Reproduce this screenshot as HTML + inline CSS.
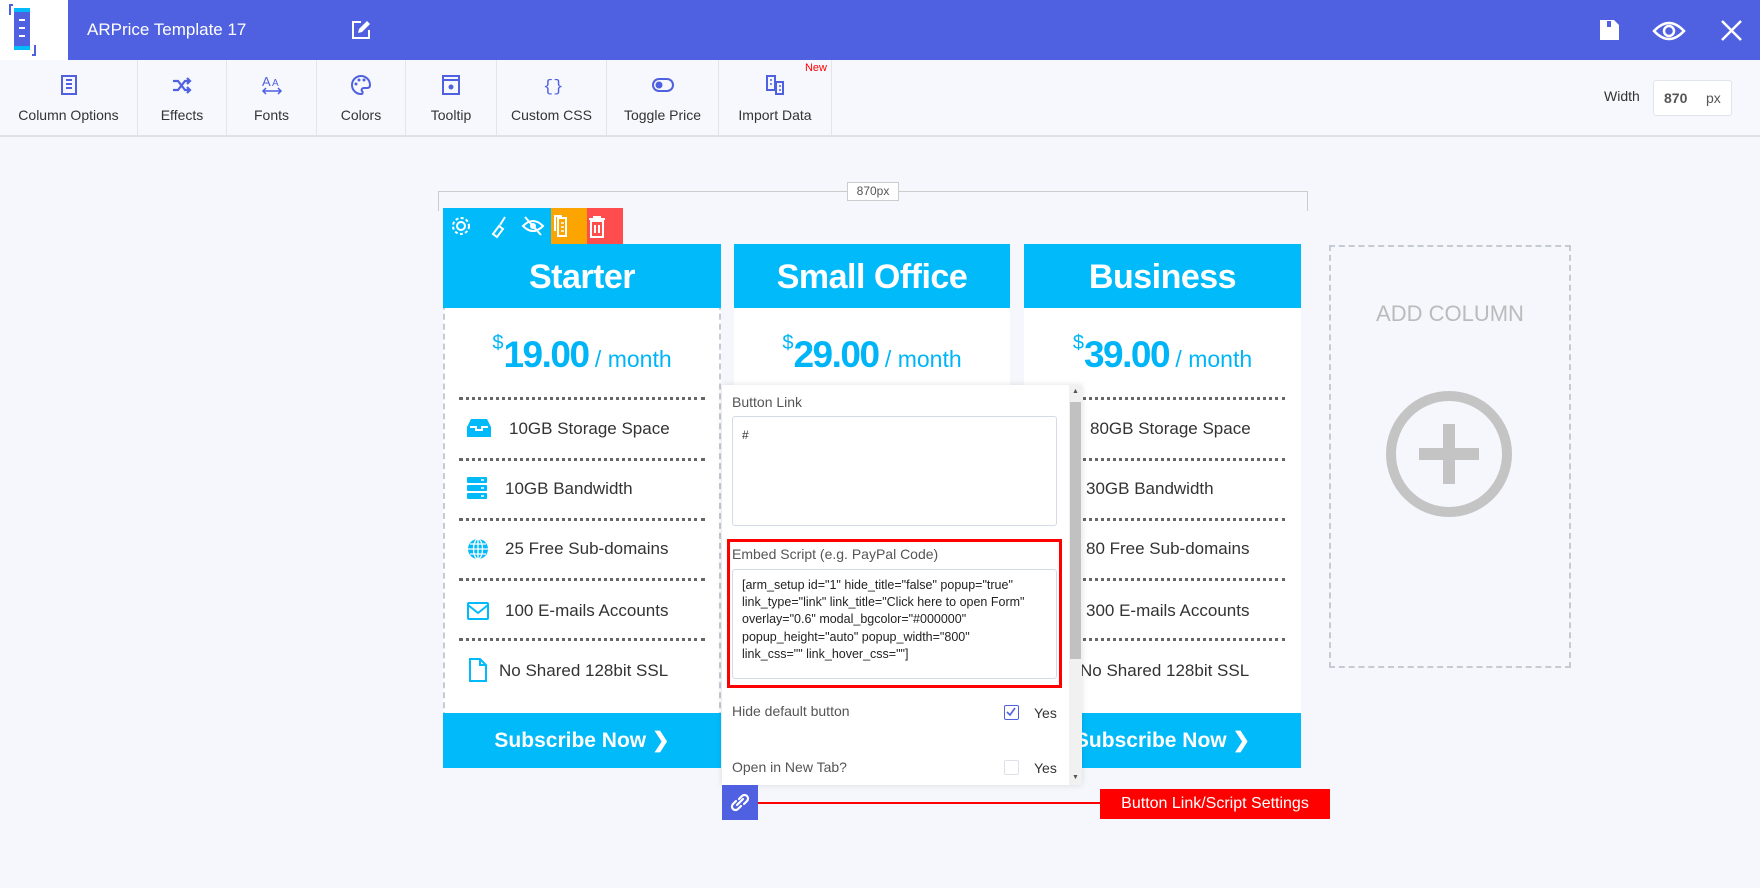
<!DOCTYPE html>
<html><head><meta charset="utf-8"><style>
*{box-sizing:border-box;margin:0;padding:0}
body{width:1760px;height:888px;background:#f5f7fc;font-family:"Liberation Sans",sans-serif;position:relative;overflow:hidden;color:#333}
.abs{position:absolute}
.hdr{left:0;top:0;width:1760px;height:60px;background:#4f61e0}
.logo{left:0;top:0;width:68px;height:60px;background:#fff}
.tb{left:0;top:60px;width:1760px;height:77px;background:#f6f8fd;border-bottom:2px solid #dfe1e7}
.ti{position:absolute;top:0;height:75px;border-right:1px solid #e3e5ea;text-align:center;font-size:14px;color:#333}
.ti span{position:absolute;left:0;right:0;top:47px}
.ti svg{position:absolute;top:14px;left:50%;margin-left:-11px}
.col{position:absolute;top:244px;height:524px;background:#fff}
.ch{height:64px;background:#00baf9;color:#fff;font-weight:bold;font-size:34px;text-align:center;line-height:66px;letter-spacing:-.5px}
.pr{position:absolute;top:90px;left:0;right:0;text-align:center;color:#00b5f7}
.pr b{font-size:37px;letter-spacing:-1.5px}
.pr i{font-style:normal;font-size:23px}
.pr sup{font-size:20px;vertical-align:top;position:relative;top:-2px}
.sep{position:absolute;left:16px;right:16px;border-top:3px dotted #666;height:0}
.ft{position:absolute;left:16px;font-size:17px;color:#333}
.btn{position:absolute;bottom:0;left:0;right:0;height:55px;background:#00baf9;color:#fff;font-weight:bold;font-size:21px;text-align:center;line-height:55px}
.lbl{position:absolute;font-size:14px;color:#555}
.ta{position:absolute;border:1px solid #d4dbe6;border-radius:3px;background:#fff}
</style></head><body>
<div class="abs hdr"></div>
<div class="abs logo">
<svg width="68" height="60" style="position:absolute;left:0;top:0"><path d="M13 5h-3v10M32 55h3v-10" stroke="#4f61e0" stroke-width="2" fill="none"/><rect x="14" y="8" width="16" height="42" rx="2" fill="#4f61e0"/><rect x="14" y="8" width="16" height="4" fill="#00baf9"/><rect x="14" y="46" width="16" height="4" fill="#00baf9"/><path d="M19 20h6M19 28h6M19 36h6" stroke="#fff" stroke-width="2"/></svg></div>
<div class="abs" style="left:87px;top:20px;color:#fff;font-size:17px">ARPrice Template 17</div>
<svg class="abs" style="left:350px;top:19px" width="22" height="22"><path d="M11 3H3v16h16v-8" stroke="#fff" stroke-width="2" fill="none"/><path d="M8 14l1-4 8-8 3 3-8 8z" fill="#fff"/></svg>
<svg class="abs" style="left:1600px;top:19px" width="20" height="22"><path d="M0 1h14l5 5v15H0z" fill="#fff"/><rect x="7" y="2" width="4" height="6" fill="#4f61e0"/></svg>
<svg class="abs" style="left:1652px;top:19px" width="34" height="24"><path d="M2 12Q17-4 32 12Q17 28 2 12z" stroke="#fff" stroke-width="2.5" fill="none"/><circle cx="17" cy="12" r="5" stroke="#fff" stroke-width="2.5" fill="none"/></svg>
<svg class="abs" style="left:1721px;top:20px" width="21" height="21"><path d="M1 1l19 19M20 1L1 20" stroke="#fff" stroke-width="2.5"/></svg>

<div class="abs tb">
<div class="ti" style="left:0;width:138px"><svg width="22" height="22"><rect x="4" y="2" width="14" height="18" stroke="#4f61e0" stroke-width="2" fill="none"/><path d="M8 6h6M8 10h6M8 14h6" stroke="#4f61e0" stroke-width="2"/></svg><span>Column Options</span></div>
<div class="ti" style="left:138px;width:89px"><svg width="22" height="22"><path d="M2 7h5l7 9h5M2 16h5l7-9h5M16 4l3 3-3 3M16 13l3 3-3 3" stroke="#4f61e0" stroke-width="2.2" fill="none"/></svg><span>Effects</span></div>
<div class="ti" style="left:227px;width:90px"><svg width="22" height="22"><text x="1" y="12" font-size="13" fill="#4f61e0" font-family="Liberation Sans">A</text><text x="11" y="12" font-size="10" fill="#4f61e0" font-family="Liberation Sans">A</text><path d="M2 17h18M5 14l-3 3 3 3M17 14l3 3-3 3" stroke="#4f61e0" stroke-width="1.5" fill="none"/></svg><span>Fonts</span></div>
<div class="ti" style="left:317px;width:89px"><svg width="22" height="22"><path d="M11 2a9 9 0 1 0 0 18c2 0 2-2 1-3s0-3 2-3h3c2 0 3-1 3-3A9 9 0 0 0 11 2z" stroke="#4f61e0" stroke-width="2" fill="none"/><circle cx="6" cy="10" r="1.5" fill="#4f61e0"/><circle cx="9" cy="6" r="1.5" fill="#4f61e0"/><circle cx="14" cy="6" r="1.5" fill="#4f61e0"/></svg><span>Colors</span></div>
<div class="ti" style="left:406px;width:91px"><svg width="22" height="22"><rect x="3" y="2" width="16" height="18" stroke="#4f61e0" stroke-width="2" fill="none"/><path d="M3 6h16" stroke="#4f61e0" stroke-width="2"/><circle cx="11" cy="13" r="2.5" fill="#4f61e0"/></svg><span>Tooltip</span></div>
<div class="ti" style="left:497px;width:110px"><svg width="22" height="22"><text x="2" y="17" font-size="17" fill="#4f61e0" font-family="Liberation Mono">{}</text></svg><span>Custom CSS</span></div>
<div class="ti" style="left:607px;width:112px"><svg width="22" height="22"><rect x="1" y="5" width="20" height="12" rx="6" stroke="#4f61e0" stroke-width="2" fill="none"/><circle cx="7" cy="11" r="3.5" fill="#4f61e0"/></svg><span>Toggle Price</span></div>
<div class="ti" style="left:719px;width:113px"><svg width="22" height="22"><rect x="3" y="2" width="8" height="14" stroke="#4f61e0" stroke-width="2" fill="none"/><rect x="12" y="8" width="7" height="12" stroke="#4f61e0" stroke-width="2" fill="none"/><path d="M6 6h2M6 10h2M15 12h2M15 16h2" stroke="#4f61e0" stroke-width="1.5"/></svg><span>Import Data</span><div style="position:absolute;right:4px;top:2px;font-size:11px;color:#f00">New</div></div>
<div class="abs" style="left:1604px;top:28px;font-size:14px;color:#333">Width</div>
<div class="abs" style="left:1653px;top:20px;width:79px;height:36px;background:#fff;border:1px solid #e0e4ec;border-radius:3px;font-size:14px"><b style="position:absolute;left:10px;top:9px;color:#555">870</b><span style="position:absolute;left:52px;top:9px;color:#555">px</span></div>
</div>

<div class="abs" style="left:438px;top:191px;width:870px;height:20px;border-top:1px solid #ccc;border-left:1px solid #ccc;border-right:1px solid #ccc"></div>
<div class="abs" style="left:847px;top:182px;width:52px;height:19px;background:#fff;border:1px solid #ccc;font-size:12px;color:#555;text-align:center;line-height:17px">870px</div>

<div class="abs" style="left:443px;top:208px;width:108px;height:36px;background:#00baf9"></div>
<div class="abs" style="left:551px;top:208px;width:36px;height:36px;background:#fca400"></div>
<div class="abs" style="left:587px;top:208px;width:36px;height:36px;background:#ff4c4c"></div>
<svg class="abs" style="left:443px;top:208px" width="180" height="36">
<circle cx="18" cy="18" r="4" stroke="#fff" stroke-width="2" fill="none"/><circle cx="18" cy="18" r="8" stroke="#fff" stroke-width="2" stroke-dasharray="3 2.3" fill="none"/>
<path d="M50 26l6-8 4 3-6 8zM57 17l5-8" stroke="#fff" stroke-width="2" fill="none"/>
<path d="M80 18q10-10 20 0q-10 10-20 0zM82 9l16 18" stroke="#fff" stroke-width="2" fill="none"/><circle cx="90" cy="18" r="3" fill="#fff"/>
<path d="M115 10h8v18h-8zM119 8h-7v15" stroke="#fff" stroke-width="2" fill="none"/><path d="M118 15h3M118 19h3M118 23h3" stroke="#fff" stroke-width="1.5"/>
<path d="M146 11h16M151 11v-2h6v2M148 13h12v16h-12zM152 17v8M156 17v8" stroke="#fff" stroke-width="2" fill="none"/>
</svg>

<div class="col" style="left:443px;width:278px;border:2px dashed #c6cad2;border-top:none">
<div class="ch" style="margin:0 -2px">Starter</div>
</div>
<div class="col" style="left:734px;width:276px"><div class="ch">Small Office</div></div>
<div class="col" style="left:1024px;width:277px"><div class="ch">Business</div></div>

<div class="abs" style="left:443px;top:244px;width:278px;height:524px">
<div class="pr"><sup>$</sup><b>19.00</b><i> / month</i></div>
<div class="sep" style="top:153px"></div><div class="sep" style="top:214px"></div><div class="sep" style="top:274px"></div><div class="sep" style="top:334px"></div><div class="sep" style="top:394px"></div>
<svg class="abs" style="left:24px;top:175px" width="24" height="18"><path d="M4 0h16l4 8v10H0V8z" fill="#00baf9"/><path d="M3 8h6v3h6V8h6" stroke="#fff" stroke-width="2" fill="none"/></svg>
<div class="ft" style="left:66px;top:175px">10GB Storage Space</div>
<svg class="abs" style="left:24px;top:233px" width="20" height="22"><rect y="0" width="20" height="6" rx="1" fill="#00baf9"/><rect y="8" width="20" height="6" rx="1" fill="#00baf9"/><rect y="16" width="20" height="6" rx="1" fill="#00baf9"/><path d="M14 3h3M14 11h3M14 19h3" stroke="#fff" stroke-width="1.5"/></svg>
<div class="ft" style="left:62px;top:235px">10GB Bandwidth</div>
<svg class="abs" style="left:24px;top:294px" width="22" height="22"><circle cx="11" cy="11" r="10" fill="#00baf9"/><path d="M1 11h20M11 1v20M3 6h16M3 16h16" stroke="#fff" stroke-width="1.3"/><ellipse cx="11" cy="11" rx="4.5" ry="10" stroke="#fff" stroke-width="1.3" fill="none"/></svg>
<div class="ft" style="left:62px;top:295px">25 Free Sub-domains</div>
<svg class="abs" style="left:24px;top:358px" width="22" height="18"><rect x="1" y="1" width="20" height="16" rx="1" stroke="#00baf9" stroke-width="2" fill="none"/><path d="M1 3l10 8 10-8" stroke="#00baf9" stroke-width="2" fill="none"/></svg>
<div class="ft" style="left:62px;top:357px">100 E-mails Accounts</div>
<svg class="abs" style="left:26px;top:414px" width="18" height="24"><path d="M1 1h10l6 6v16H1zM11 1v6h6" stroke="#00baf9" stroke-width="2" fill="none"/></svg>
<div class="ft" style="left:56px;top:417px">No Shared 128bit SSL</div>
<div class="btn">Subscribe Now &#10095;</div>
</div>
<div class="abs" style="left:734px;top:244px;width:276px;height:524px"><div class="pr"><sup>$</sup><b>29.00</b><i> / month</i></div></div>
<div class="abs" style="left:1024px;top:244px;width:277px;height:524px">
<div class="pr"><sup>$</sup><b>39.00</b><i> / month</i></div>
<div class="sep" style="top:153px"></div><div class="sep" style="top:214px"></div><div class="sep" style="top:274px"></div><div class="sep" style="top:334px"></div><div class="sep" style="top:394px"></div>
<div class="ft" style="left:66px;top:175px">80GB Storage Space</div>
<div class="ft" style="left:62px;top:235px">30GB Bandwidth</div>
<div class="ft" style="left:62px;top:295px">80 Free Sub-domains</div>
<div class="ft" style="left:62px;top:357px">300 E-mails Accounts</div>
<div class="ft" style="left:56px;top:417px">No Shared 128bit SSL</div>
<div class="btn">Subscribe Now &#10095;</div>
</div>

<div class="abs" style="left:1329px;top:245px;width:242px;height:423px;border:2px dashed #c6cad2"></div>
<div class="abs" style="left:1329px;top:301px;width:242px;text-align:center;font-size:22px;color:#bbb">ADD COLUMN</div>
<svg class="abs" style="left:1383px;top:388px" width="132" height="132"><circle cx="66" cy="66" r="58" stroke="#c4c4c4" stroke-width="10" fill="none"/><path d="M66 36v60M36 66h60" stroke="#c4c4c4" stroke-width="12"/></svg>

<div class="abs" style="left:722px;top:385px;width:360px;height:400px;background:#fff;box-shadow:0 0 6px rgba(0,0,0,.12)"></div>
<div class="abs" style="left:1069px;top:385px;width:13px;height:400px;background:#f1f1f1"></div>
<div class="abs" style="left:1070px;top:402px;width:11px;height:257px;background:#c1c1c1"></div>
<div class="abs" style="left:1072px;top:388px;font-size:7px;color:#555">▲</div>
<div class="abs" style="left:1072px;top:774px;font-size:7px;color:#555">▼</div>
<div class="lbl" style="left:732px;top:394px">Button Link</div>
<div class="ta" style="left:732px;top:416px;width:325px;height:110px"><span style="position:absolute;left:9px;top:11px;font-size:12px">#</span></div>
<div class="abs" style="left:727px;top:539px;width:335px;height:149px;border:3px solid #f00"></div>
<div class="lbl" style="left:732px;top:546px">Embed Script (e.g. PayPal Code)</div>
<div class="ta" style="left:732px;top:569px;width:325px;height:110px;font-size:12.5px;line-height:17.2px;color:#222;padding:7px 26px 7px 9px">[arm_setup id="1" hide_title="false" popup="true" link_type="link" link_title="Click here to open Form" overlay="0.6" modal_bgcolor="#000000" popup_height="auto" popup_width="800" link_css="" link_hover_css=""]</div>
<div class="lbl" style="left:732px;top:703px">Hide default button</div>
<div class="abs" style="left:1004px;top:705px;width:15px;height:15px;border:1.5px solid #4f61e0;border-radius:2px"><svg width="12" height="12" style="position:absolute;left:0;top:0"><path d="M2 6l3 3 5-7" stroke="#4f61e0" stroke-width="1.6" fill="none"/></svg></div>
<div class="lbl" style="left:1034px;top:705px;color:#333">Yes</div>
<div class="lbl" style="left:732px;top:759px">Open in New Tab?</div>
<div class="abs" style="left:1004px;top:760px;width:15px;height:15px;border:1px solid #dde1e8;border-radius:2px"></div>
<div class="lbl" style="left:1034px;top:760px;color:#333">Yes</div>

<div class="abs" style="left:722px;top:785px;width:36px;height:35px;background:#4f61e0"></div>
<svg class="abs" style="left:722px;top:785px" width="36" height="35"><path d="M17 14l3-3a3.5 3.5 0 0 1 5 5l-3 3M19 21l-3 3a3.5 3.5 0 0 1-5-5l3-3M15 20l6-6" stroke="#fff" stroke-width="2.2" fill="none" stroke-linecap="round"/></svg>
<div class="abs" style="left:758px;top:802px;width:342px;height:2px;background:#f00"></div>
<div class="abs" style="left:1100px;top:789px;width:230px;height:30px;background:#f00;color:#fff;font-size:16px;text-align:center;line-height:30px">Button Link/Script Settings</div>
</body></html>
